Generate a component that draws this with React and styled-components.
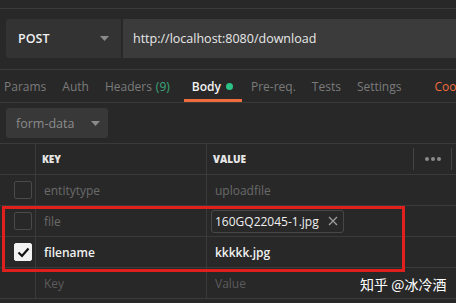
import React from "react";
import styled, { createGlobalStyle } from "styled-components";

const GlobalStyle = createGlobalStyle`
  html, body {
    margin: 0;
    padding: 0;
    background: #282828;
  }
  body {
    font-family: "Open Sans", "Noto Sans", sans-serif;
    overflow: hidden;
  }
`;

const tabs = [
  { name: "Params" },
  { name: "Auth" },
  { name: "Headers", count: "(9)" },
  { name: "Body", active: true, dot: true },
  { name: "Pre-req." },
  { name: "Tests" },
  { name: "Settings" },
];

const rows = [
  { key: "entitytype", value: "uploadfile", muted: true },
  { key: "file", file: "160GQ22045-1.jpg", muted: true },
  { key: "filename", value: "kkkkk.jpg", checked: true },
];

function Caret() {
  return (
    <svg width="9" height="5" viewBox="0 0 9 5">
      <path d="M0 0h9L4.5 5z" fill="#8a8a8a" />
    </svg>
  );
}

function App() {
  return (
    <Page>
      <GlobalStyle />
      <TopStrip />
      <RequestBar>
        <Method>
          POST
          <Caret />
        </Method>
        <Url>http://localhost:8080/download</Url>
      </RequestBar>
      <Tabs>
        {tabs.map((t) => (
          <Tab key={t.name} $active={t.active}>
            {t.name}
            {t.count && <Count>{t.count}</Count>}
            {t.dot && <Dot />}
          </Tab>
        ))}
        <Cookies>Cookies</Cookies>
      </Tabs>
      <BodyBar>
        <BodyType>
          form-data
          <Caret />
        </BodyType>
      </BodyBar>
      <Table>
        <Row $header>
          <CheckCell />
          <KeyCell $header>KEY</KeyCell>
          <ValueCell $header>VALUE</ValueCell>
          <MoreCell>
            <Dots>
              <i />
              <i />
              <i />
            </Dots>
          </MoreCell>
        </Row>
        {rows.map((r) => (
          <Row key={r.key}>
            <CheckCell>
              <Box $checked={r.checked}>
                {r.checked && (
                  <svg width="13" height="11" viewBox="0 0 13 11">
                    <path d="M1.5 5.5l3.5 3.5 6.5-7.5" stroke="#111" strokeWidth="2.2" fill="none" />
                  </svg>
                )}
              </Box>
            </CheckCell>
            <KeyCell $muted={r.muted}>{r.key}</KeyCell>
            <ValueCell $muted={r.muted && !r.file}>
              {r.file ? (
                <FileChip>
                  {r.file}
                  <svg width="10" height="10" viewBox="0 0 10 10">
                    <path d="M1 1l8 8M9 1l-8 8" stroke="#9a9a9a" strokeWidth="1.4" />
                  </svg>
                </FileChip>
              ) : (
                r.value
              )}
            </ValueCell>
          </Row>
        ))}
        <Row>
          <CheckCell />
          <KeyCell $placeholder>Key</KeyCell>
          <ValueCell $placeholder>Value</ValueCell>
        </Row>
        <Highlight />
        <Watermark>知乎 @冰冷酒</Watermark>
      </Table>
    </Page>
  );
}

export default App;

const Page = styled.div`
  width: 456px;
  height: 303px;
  background: #282828;
  overflow: hidden;
  position: relative;
`;

const TopStrip = styled.div`
  height: 8px;
  border-bottom: 1px solid #3a3a3a;
`;

const RequestBar = styled.div`
  display: flex;
  height: 39px;
  margin: 10px 0 0 6px;
  gap: 2px;
`;

const Method = styled.div`
  width: 115px;
  box-sizing: border-box;
  background: #333333;
  border-radius: 3px 0 0 3px;
  display: flex;
  align-items: center;
  justify-content: space-between;
  padding: 0 12px 0 12px;
  color: #f0f0f0;
  font-weight: 600;
  font-size: 12.5px;
`;

const Url = styled.div`
  flex: 1;
  background: #3b3b3b;
  display: flex;
  align-items: center;
  padding-left: 10px;
  color: #e8e8e8;
  font-size: 12.5px;
`;

const Tabs = styled.div`
  margin-top: 11px;
  border-top: 1px solid #3a3a3a;
  border-bottom: 1px solid #3a3a3a;
  height: 32px;
  display: flex;
  align-items: stretch;
  padding-left: 4px;
  white-space: nowrap;
`;

const Tab = styled.div`
  display: flex;
  align-items: center;
  margin-right: 16px;
  font-size: 12px;
  color: ${(p) => (p.$active ? "#f2f2f2" : "#7b7b7b")};
  font-weight: ${(p) => (p.$active ? 600 : 400)};
  position: relative;
  ${(p) =>
    p.$active &&
    `
    padding: 0 9px 0 8px;
    margin-left: -2px;
    margin-right: 9px;
    &::after {
      content: "";
      position: absolute;
      left: 0;
      right: 0;
      bottom: 0;
      height: 3px;
      background: #ef6c3e;
    }
  `}
`;

const Count = styled.span`
  color: #3aa77a;
  margin-left: 4px;
`;

const Dot = styled.span`
  width: 7px;
  height: 7px;
  border-radius: 50%;
  background: #2cc285;
  margin-left: 5px;
`;

const Cookies = styled.div`
  display: flex;
  align-items: center;
  margin-left: 17px;
  color: #ef6c3e;
  font-size: 12px;
`;

const BodyBar = styled.div`
  padding: 5px 0 5px 6px;
  border-bottom: 1px solid #3a3a3a;
`;

const BodyType = styled.div`
  width: 102px;
  height: 30px;
  box-sizing: border-box;
  background: #383838;
  border-radius: 3px;
  display: flex;
  align-items: center;
  gap: 17px;
  padding-left: 10px;
  color: #8c8c8c;
  font-size: 12.5px;
`;

const Table = styled.div`
  position: relative;
`;

const Row = styled.div`
  display: flex;
  height: 31px;
  box-sizing: border-box;
  border-bottom: 1px solid #3a3a3a;
`;

const CheckCell = styled.div`
  width: 36px;
  flex: none;
  border-right: 1px solid #3a3a3a;
  box-sizing: border-box;
  display: flex;
  align-items: center;
  justify-content: center;
  padding-left: 11px;
`;

const cellColor = (p) => {
  if (p.$header) return "#e6e6e6";
  if (p.$placeholder) return "#5c5c5c";
  if (p.$muted) return "#6a6a6a";
  return "#f0f0f0";
};

const KeyCell = styled.div`
  width: 171px;
  flex: none;
  box-sizing: border-box;
  border-right: 1px solid #3a3a3a;
  display: flex;
  align-items: center;
  padding-left: ${(p) => (p.$header ? "6px" : "8px")};
  color: ${cellColor};
  font-size: ${(p) => (p.$header ? "10px" : "12px")};
  font-weight: ${(p) => (p.$header ? 800 : !p.$muted && !p.$placeholder ? 600 : 400)};
`;

const ValueCell = styled(KeyCell)`
  width: 206px;
  border-right: none;
  padding-left: ${(p) => (p.$header ? "6px" : "8px")};
`;

const MoreCell = styled.div`
  margin: 4px 0;
  width: 37px;
  border-left: 1px solid #444;
  border-right: 1px solid #444;
  display: flex;
  align-items: center;
  justify-content: center;
`;

const Dots = styled.div`
  display: flex;
  gap: 2px;
  i {
    width: 4px;
    height: 4px;
    border-radius: 50%;
    background: #8a8a8a;
  }
`;

const Box = styled.div`
  width: 16px;
  height: 16px;
  border-radius: 2px;
  border: 1px solid ${(p) => (p.$checked ? "#f2f2f2" : "#4a4a4a")};
  background: ${(p) => (p.$checked ? "#f2f2f2" : "transparent")};
  display: flex;
  align-items: center;
  justify-content: center;
`;

const FileChip = styled.div`
  display: flex;
  align-items: center;
  gap: 9px;
  height: 21px;
  margin-left: -4px;
  padding: 0 5px 0 3px;
  border: 1px solid #474747;
  border-radius: 3px;
  color: #f0f0f0;
  font-weight: 400;
  font-size: 12px;
`;

const Highlight = styled.div`
  position: absolute;
  left: 2px;
  top: 62px;
  width: 403px;
  height: 66px;
  box-sizing: border-box;
  border: 3px solid #e0201c;
  pointer-events: none;
`;

const Watermark = styled.div`
  position: absolute;
  left: 360px;
  top: 130px;
  color: #ffffff;
  font-family: "Noto Sans CJK SC", sans-serif;
  font-size: 14px;
`;
